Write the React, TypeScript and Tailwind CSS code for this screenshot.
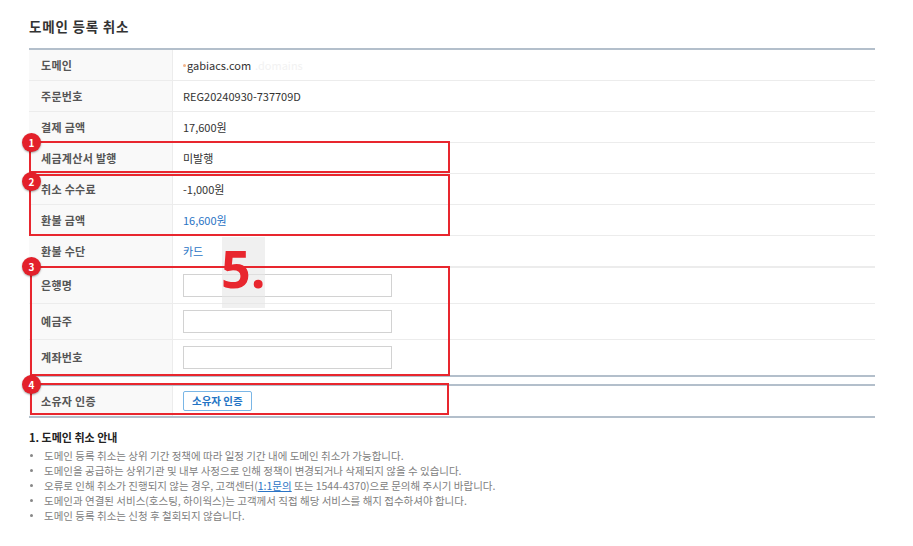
import React from 'react';

const font = { fontFamily: '"Noto Sans CJK KR", "Noto Sans", sans-serif' };

type Row = { label: string; value?: React.ReactNode };

const rows: Row[] = [
  {
    label: '도메인',
    value: (
      <span className="flex items-center">
        <span className="w-[3px] h-[3px] rounded-full bg-[#f2b38a] mr-[1px]" />
        gabiacs.com
        <span className="ml-1 text-[#f2f2f2]">.domains</span>
      </span>
    ),
  },
  { label: '주문번호', value: 'REG20240930-737709D' },
  { label: '결제 금액', value: '17,600원' },
  { label: '세금계산서 발행', value: '미발행' },
  { label: '취소 수수료', value: '-1,000원' },
  { label: '환불 금액', value: <span className="text-[#2b74c5]">16,600원</span> },
  { label: '환불 수단', value: <span className="text-[#2b74c5]">카드</span> },
];

const inputRows = ['은행명', '예금주', '계좌번호'];

const notes: React.ReactNode[] = [
  '도메인 등록 취소는 상위 기간 정책에 따라 일정 기간 내에 도메인 취소가 가능합니다.',
  '도메인을 공급하는 상위기관 및 내부 사정으로 인해 정책이 변경되거나 삭제되지 않을 수 있습니다.',
  <>
    오류로 인해 취소가 진행되지 않는 경우, 고객센터(
    <span className="text-[#2b74c5] underline">1:1문의</span> 또는 1544-4370)으로 문의해 주시기 바랍니다.
  </>,
  '도메인과 연결된 서비스(호스팅, 하이웍스)는 고객께서 직접 해당 서비스를 해지 접수하셔야 합니다.',
  '도메인 등록 취소는 신청 후 철회되지 않습니다.',
];

const boxes = [
  { n: 1, cls: 'left-[29px] top-[141px] w-[421px] h-[32px]', dot: 'top-[133px]' },
  { n: 2, cls: 'left-[29px] top-[174px] w-[421px] h-[62px]', dot: 'top-[172px]' },
  { n: 3, cls: 'left-[30px] top-[266px] w-[420px] h-[110px]', dot: 'top-[257px]' },
  { n: 4, cls: 'left-[30px] top-[383px] w-[419px] h-[32px]', dot: 'top-[375px]' },
];

const labelCls =
  'w-[144px] bg-[#f9f9f9] border-r border-[#ececec] flex items-center pl-[12px] font-bold text-[#555] tracking-[0.3px]';

export default function App() {
  return (
    <div className="relative w-[913px] h-[546px] bg-white text-[#333] overflow-hidden" style={font}>
      <div className="pl-[29px] pr-[38px] pt-[16px]">
        <h2 className="text-[13.5px] font-bold text-[#333] leading-[20px] tracking-[0.8px]">도메인 등록 취소</h2>

        <div className="mt-[12px] border-t-2 border-b-2 border-[#b3bfcb]">
          {rows.map(r => (
            <div key={r.label} className="flex h-[31px] border-b border-[#ececec] last:border-b-0 text-[11px]">
              <div className={labelCls}>{r.label}</div>
              <div className="flex-1 flex items-center pl-[10px]">{r.value}</div>
            </div>
          ))}
          {inputRows.map(l => (
            <div key={l} className="flex h-[36px] border-t border-[#ececec] text-[11px]">
              <div className={labelCls}>{l}</div>
              <div className="flex-1 flex items-center pl-[10px]">
                <input className="w-[209px] h-[23px] border border-[#d2d2d2] bg-white outline-none" />
              </div>
            </div>
          ))}
        </div>

        <div className="mt-[7px] border-t-2 border-b-2 border-[#b3bfcb]">
          <div className="flex h-[30px] text-[11px]">
            <div className={labelCls}>소유자 인증</div>
            <div className="flex-1 flex items-center pl-[10px]">
              <button className="h-[20px] px-[8px] border border-[#7ab6e6] rounded-[2px] text-[10.5px] font-bold text-[#2474c4] bg-white leading-none">
                소유자 인증
              </button>
            </div>
          </div>
        </div>

        <h3 className="mt-[11px] text-[11px] font-bold text-[#222] leading-[16px]">1. 도메인 취소 안내</h3>
        <ul className="mt-[3px] text-[10.5px] text-[#808080]">
          {notes.map((n, i) => (
            <li key={i} className="flex items-center h-[15px]">
              <span className="w-[3px] h-[3px] rounded-full bg-[#888] ml-[1px] mr-[11px]" />
              <span>{n}</span>
            </li>
          ))}
        </ul>
      </div>

      {/* annotation overlay */}
      <div className="absolute left-[222px] top-[237px] w-[43px] h-[71px] bg-[#e6e6e6]/60" />
      <div
        className="absolute left-[221px] top-[235px] text-[52px] font-bold text-[#e8262e] leading-[66px]"
        style={{ fontFamily: '"Open Sans", "Noto Sans", sans-serif' }}
      >
        5.
      </div>
      {boxes.map(b => (
        <React.Fragment key={b.n}>
          <div className={`absolute border-2 border-[#e8262e] ${b.cls}`} />
          <div
            className={`absolute left-[22px] w-[19px] h-[19px] rounded-full bg-[#e3202a] text-white text-[10px] font-bold flex items-center justify-center shadow-[0_1px_2px_rgba(0,0,0,0.35)] ${b.dot}`}
          >
            {b.n}
          </div>
        </React.Fragment>
      ))}
    </div>
  );
}
